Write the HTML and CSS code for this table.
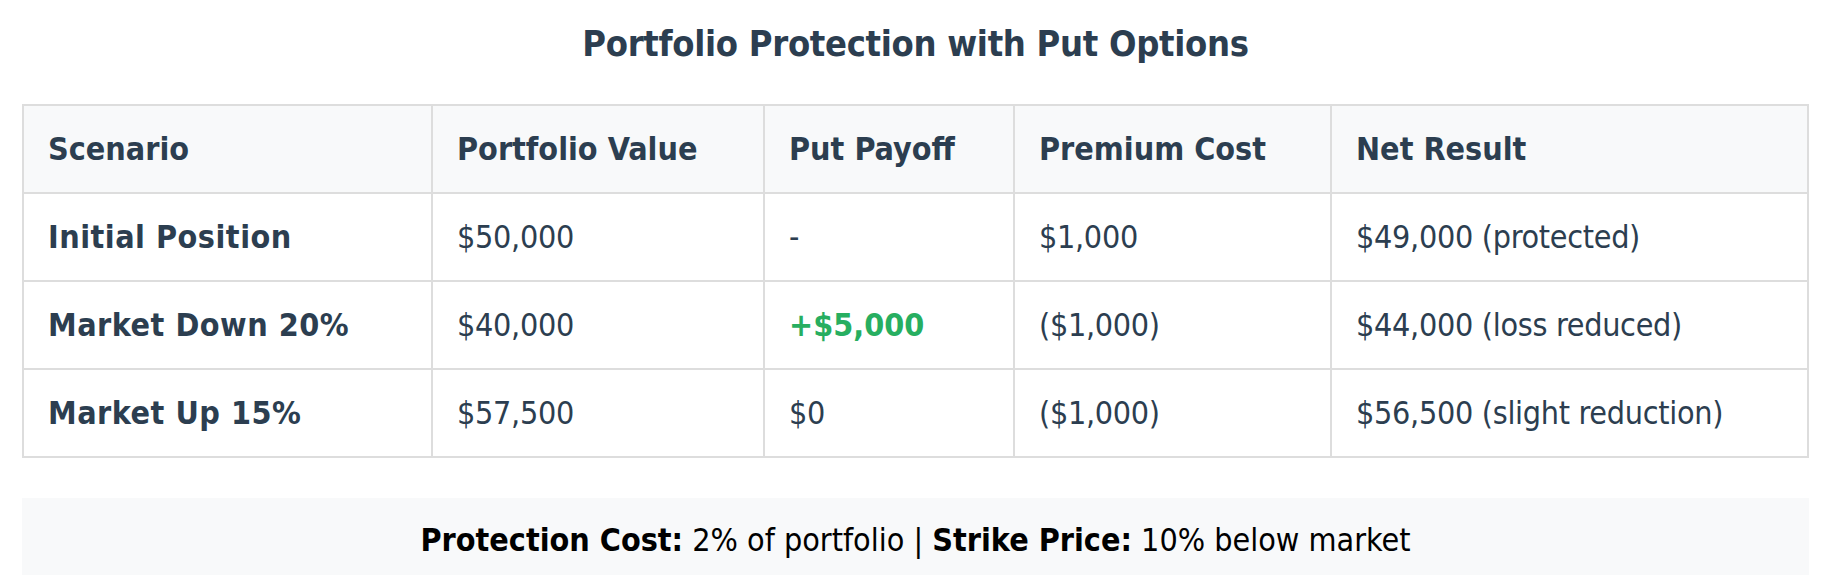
FILE: index.html
```html
<!DOCTYPE html>
<html lang="en">
<head>
<meta charset="utf-8">
<title>Portfolio Protection with Put Options</title>
<link rel="stylesheet" href="styles.css">
</head>
<body>
<div class="wrap">
  <h2 class="title">Portfolio Protection with Put Options</h2>
  <table class="grid">
    <colgroup>
      <col class="c1"><col class="c2"><col class="c3"><col class="c4"><col class="c5">
    </colgroup>
    <thead>
      <tr>
        <th>Scenario</th>
        <th>Portfolio Value</th>
        <th>Put Payoff</th>
        <th>Premium Cost</th>
        <th>Net Result</th>
      </tr>
    </thead>
    <tbody>
      <tr>
        <td class="label">Initial Position</td>
        <td>$50,000</td>
        <td>-</td>
        <td>$1,000</td>
        <td>$49,000 (protected)</td>
      </tr>
      <tr>
        <td class="label">Market Down 20%</td>
        <td>$40,000</td>
        <td class="gain">+$5,000</td>
        <td>($1,000)</td>
        <td>$44,000 (loss reduced)</td>
      </tr>
      <tr>
        <td class="label">Market Up 15%</td>
        <td>$57,500</td>
        <td>$0</td>
        <td>($1,000)</td>
        <td>$56,500 (slight reduction)</td>
      </tr>
    </tbody>
  </table>
  <div class="summary">
    <strong>Protection Cost:</strong> 2% of portfolio | <strong>Strike Price:</strong> 10% below market
  </div>
</div>
</body>
</html>
```
FILE: styles.css
```css
html, body {
  margin: 0;
  padding: 0;
  background: #ffffff;
}

body {
  font-family: "DejaVu Sans Condensed", "DejaVu Sans", Verdana, sans-serif;
  font-size: 32px;
  color: #2c3e50;
}

.wrap {
  margin: 0 35px 0 22px;
}

.title {
  margin: 23px 0 39px;
  font-size: 36px;
  line-height: 42px;
  font-weight: bold;
  text-align: center;
  letter-spacing: -0.3px;
  color: #2c3e50;
}

.grid {
  width: 100%;
  border-collapse: collapse;
  table-layout: fixed;
  border: 2px solid #dddddd;
}

.c1 { width: 409px; }
.c2 { width: 332px; }
.c3 { width: 250px; }
.c4 { width: 317px; }
.c5 { width: auto; }

.grid th,
.grid td {
  border: 2px solid #dddddd;
  padding: 24px 24px;
  line-height: 38px;
  text-align: left;
  white-space: nowrap;
}

.grid td {
  letter-spacing: -0.3px;
}

.grid th {
  background: #f8f9fa;
  font-weight: bold;
  color: #2c3e50;
}

.grid td.label {
  font-weight: bold;
  letter-spacing: 0.5px;
}

.grid td.gain {
  color: #27ae60;
  font-weight: bold;
  letter-spacing: 0;
}

.summary {
  margin-top: 40px;
  background: #f8f9fa;
  padding: 23px 20px 33px;
  text-align: center;
  line-height: 38px;
  color: #000000;
}

.summary strong {
  font-weight: bold;
}
```
